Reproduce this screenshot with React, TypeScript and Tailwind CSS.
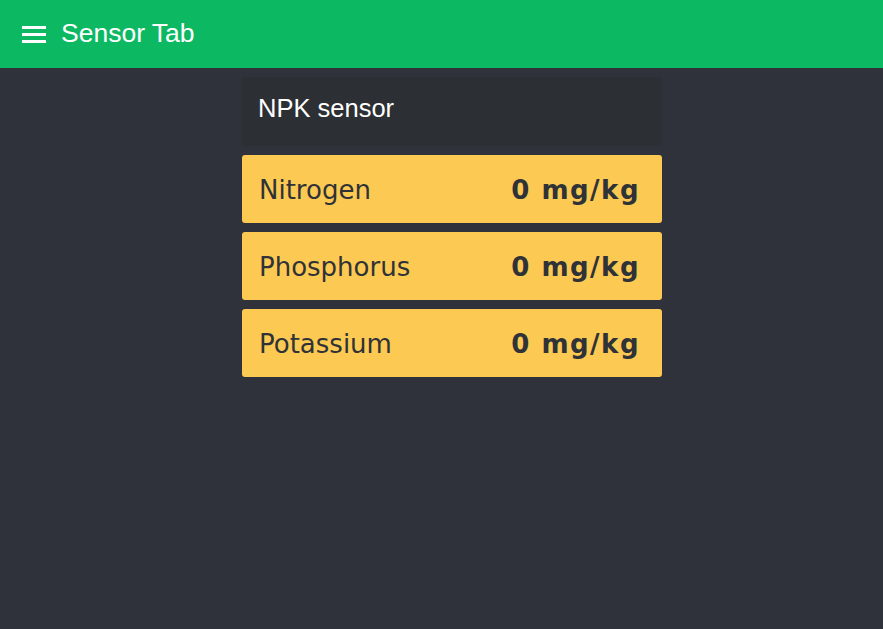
const rows = [
  { name: "Nitrogen", value: "0 mg/kg" },
  { name: "Phosphorus", value: "0 mg/kg" },
  { name: "Potassium", value: "0 mg/kg" },
];

export default function App() {
  return (
    <div className="min-h-[629px] bg-[#2f323a] flex flex-col">
      <header className="h-[68px] bg-[#0db863] flex items-center px-[22px] gap-[15px]">
        <div className="flex flex-col gap-[4px] w-[24px]">
          <span className="block h-[3px] bg-white" />
          <span className="block h-[3px] bg-white" />
          <span className="block h-[3px] bg-white" />
        </div>
        <h1 className="text-white text-[26.5px] font-['Liberation_Sans',Arial,sans-serif] leading-none -mt-[2px]">
          Sensor Tab
        </h1>
      </header>

      <main className="pl-[242px] pt-[9px]">
        <div className="w-[420px] flex flex-col gap-[9px]">
          <div className="h-[69px] bg-[#2c2f33] rounded-t-[3px] flex items-center px-[16px] pb-[6px]">
            <span className="text-white text-[25.5px] font-['Liberation_Sans',Arial,sans-serif]">
              NPK sensor
            </span>
          </div>
          {rows.map((r) => (
            <div
              key={r.name}
              className="h-[68px] bg-[#fcc952] rounded-[3px] flex items-center justify-between pl-[17px] pr-[22px] pt-[2px] text-[#2f3237] font-['DejaVu_Sans',sans-serif] text-[26px]"
            >
              <span>{r.name}</span>
              <span className="font-bold tracking-[1.5px]">{r.value}</span>
            </div>
          ))}
        </div>
      </main>
    </div>
  );
}
